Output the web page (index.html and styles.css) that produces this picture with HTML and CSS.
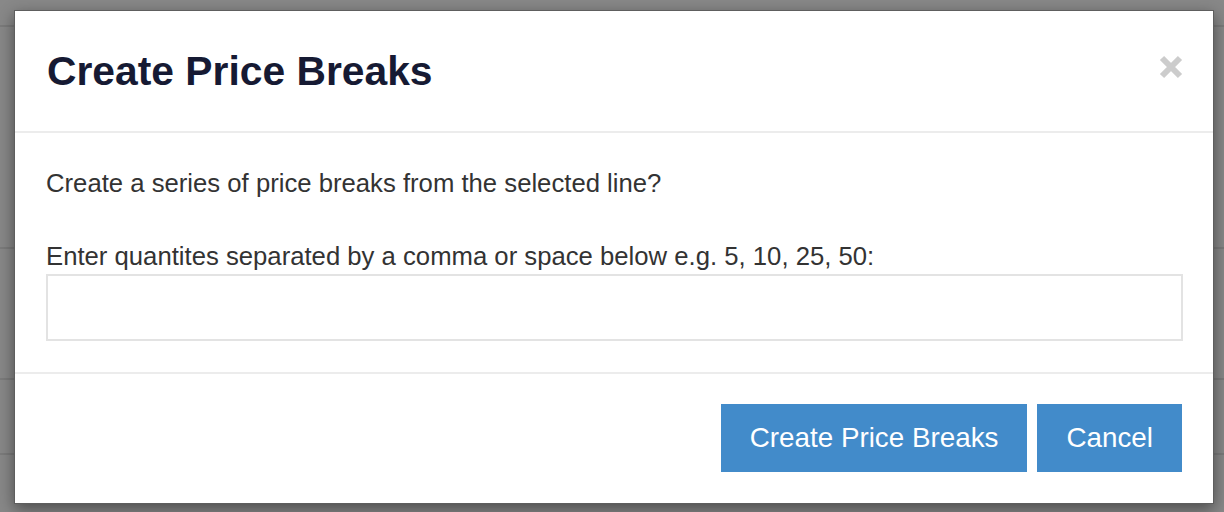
FILE: index.html
```html
<!DOCTYPE html>
<html>
<head>
<meta charset="utf-8">
<link rel="stylesheet" href="styles.css">
</head>
<body>
<div class="page">
  <div class="row r1"></div>
  <div class="row r2"></div>
  <div class="row r3"></div>
  <div class="row r4"></div>
</div>
<div class="modal">
  <div class="modal-header">
    <h1 class="title">Create Price Breaks</h1>
    <button class="close" aria-label="Close">
      <svg width="24" height="24" viewBox="0 0 24 24"><path d="M3 3 L21 21 M21 3 L3 21" stroke="#cccccc" stroke-width="6" stroke-linecap="butt"/></svg>
    </button>
  </div>
  <div class="modal-body">
    <p class="lead">Create a series of price breaks from the selected line?</p>
    <label class="label">Enter quantites separated by a comma or space below e.g. 5, 10, 25, 50:</label>
    <input class="input" type="text">
  </div>
  <div class="modal-footer">
    <button class="btn">Create Price Breaks</button>
    <button class="btn">Cancel</button>
  </div>
</div>
</body>
</html>
```
FILE: styles.css
```css
* { box-sizing: border-box; }
html, body { margin: 0; padding: 0; }
body {
  width: 1224px;
  height: 512px;
  overflow: hidden;
  background: #888888;
  font-family: "Liberation Sans", Arial, Helvetica, sans-serif;
  position: relative;
}
.page { display: flex; flex-direction: column; }
.row { border-bottom: 2px solid #7b7b7b; }
.r1 { height: 27px; }
.r2 { height: 222px; }
.r3 { height: 131px; }
.r4 { height: 75px; }

.modal {
  position: absolute;
  left: 14px;
  top: 10px;
  width: 1200px;
  height: 494px;
  background: #ffffff;
  border: 1px solid #5e5e5e;
  box-shadow: 0 5px 15px rgba(0,0,0,0.45);
  display: flex;
  flex-direction: column;
}
.modal-header {
  height: 122px;
  padding: 0 30px 0 32px;
  border-bottom: 2px solid #ececec;
  display: flex;
  align-items: center;
  justify-content: space-between;
}
.title {
  margin: 0;
  font-size: 40.8px;
  font-weight: bold;
  color: #161a33;
  line-height: 1;
}
.close {
  border: 0;
  background: none;
  padding: 0;
  width: 24px;
  height: 24px;
  margin-top: -8px;
  display: flex;
}
.modal-body {
  padding: 33px 30px 31px 31px;
  display: flex;
  flex-direction: column;
  border-bottom: 2px solid #ececec;
}
.lead {
  margin: 0 0 39px;
  font-size: 25.7px;
  line-height: 34px;
  color: #333333;
}
.label {
  font-size: 25.7px;
  line-height: 34px;
  color: #333333;
  margin-bottom: 1px;
}
.input {
  height: 67px;
  width: 100%;
  border: 2px solid #e3e3e3;
  background: #fff;
  outline: none;
}
.modal-footer {
  flex: 1;
  display: flex;
  justify-content: flex-end;
  align-items: flex-start;
  gap: 10px;
  padding: 30px 31px 0;
}
.btn {
  height: 68px;
  border: 0;
  background: #428bca;
  color: #ffffff;
  font-family: "Liberation Sans", Arial, Helvetica, sans-serif;
  font-size: 27.8px;
  padding: 0 29px;
}
```
